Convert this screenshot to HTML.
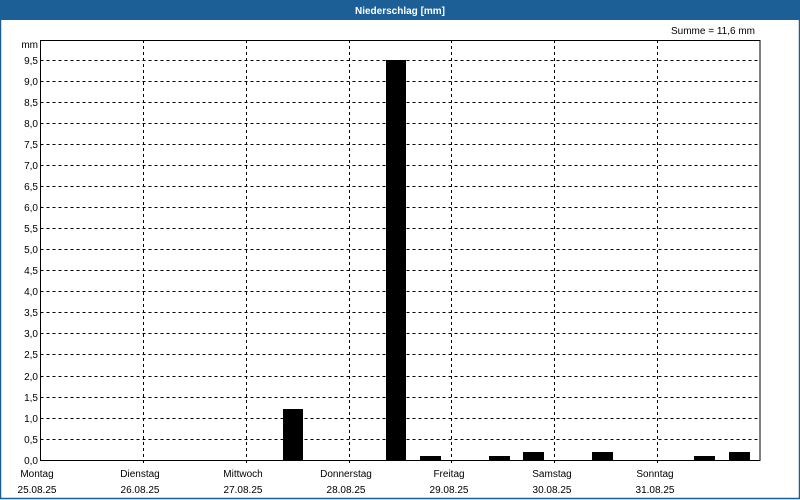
<!DOCTYPE html>
<html><head><meta charset="utf-8"><style>
body{margin:0;background:#fff;}
svg{display:block}
text{font-family:"Liberation Sans",sans-serif;font-size:10px;fill:#000}
</style></head><body>
<svg width="800" height="500" viewBox="0 0 800 500">
<rect x="0" y="0" width="800" height="500" fill="#fff"/>
<rect x="0.5" y="0.5" width="799" height="498" fill="none" stroke="#1b5f96" stroke-width="1.5"/>
<rect x="0" y="0" width="800" height="20" fill="#1b5f96"/>
<text x="400" y="14" text-anchor="middle" style="fill:#fff;font-weight:bold;font-size:10px">Niederschlag [mm]</text>
<text x="755" y="34" text-anchor="end">Summe = 11,6 mm</text>
<text x="38" y="48" text-anchor="end">mm</text>
<g stroke="#000" stroke-width="1" stroke-dasharray="3,3" fill="none">
<path d="M40.5 60.5H760M40.5 81.5H760M40.5 102.5H760M40.5 123.5H760M40.5 144.5H760M40.5 165.5H760M40.5 186.5H760M40.5 207.5H760M40.5 228.5H760M40.5 249.5H760M40.5 270.5H760M40.5 291.5H760M40.5 312.5H760M40.5 333.5H760M40.5 354.5H760M40.5 376.5H760M40.5 397.5H760M40.5 418.5H760M40.5 439.5H760"/>
<path d="M143.5 40V465M246.5 40V465M349.5 40V465M451.5 40V465M554.5 40V465M657.5 40V465"/>
</g>
<rect x="40.5" y="40.5" width="719.5" height="420" fill="none" stroke="#000" stroke-width="1"/>
<g text-anchor="end">
<text x="38" y="64">9,5</text><text x="38" y="85">9,0</text><text x="38" y="106">8,5</text><text x="38" y="127">8,0</text><text x="38" y="148">7,5</text><text x="38" y="169">7,0</text><text x="38" y="190">6,5</text><text x="38" y="211">6,0</text><text x="38" y="232">5,5</text><text x="38" y="253">5,0</text><text x="38" y="274">4,5</text><text x="38" y="295">4,0</text><text x="38" y="316">3,5</text><text x="38" y="337">3,0</text><text x="38" y="358">2,5</text><text x="38" y="380">2,0</text><text x="38" y="401">1,5</text><text x="38" y="422">1,0</text><text x="38" y="443">0,5</text><text x="38" y="464">0,0</text>
</g>
<g fill="#000">
<rect x="283" y="409" width="20" height="51"/>
<rect x="386" y="60" width="20" height="400"/>
<rect x="420" y="456" width="21" height="4"/>
<rect x="489" y="456" width="21" height="4"/>
<rect x="523" y="452" width="21" height="8"/>
<rect x="592" y="452" width="21" height="8"/>
<rect x="694" y="456" width="21" height="4"/>
<rect x="729" y="452" width="21" height="8"/>
</g>
<g text-anchor="middle">
<text x="37" y="477">Montag</text><text x="37" y="493">25.08.25</text>
<text x="140" y="477">Dienstag</text><text x="140" y="493">26.08.25</text>
<text x="243" y="477">Mittwoch</text><text x="243" y="493">27.08.25</text>
<text x="346" y="477">Donnerstag</text><text x="346" y="493">28.08.25</text>
<text x="449" y="477">Freitag</text><text x="449" y="493">29.08.25</text>
<text x="552" y="477">Samstag</text><text x="552" y="493">30.08.25</text>
<text x="655" y="477">Sonntag</text><text x="655" y="493">31.08.25</text>
</g>
</svg>
</body></html>
